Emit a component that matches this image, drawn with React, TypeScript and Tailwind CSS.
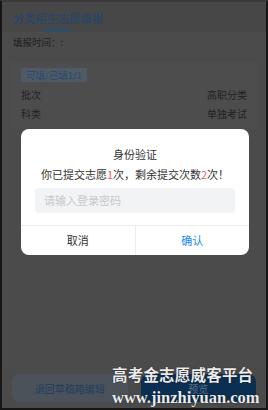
import React from 'react';

const cjk = '"Noto Sans CJK SC", "Noto Sans", sans-serif';

function InfoRow({ label, value }: { label: string; value: string }) {
  return (
    <div className="flex items-center justify-between h-[19px] text-[10px] leading-[14px] text-[#222222]">
      <span>{label}</span>
      <span>{value}</span>
    </div>
  );
}

function VerifyDialog() {
  return (
    <div className="absolute left-[19px] top-[127px] w-[228px] bg-white rounded-[8px] overflow-hidden">
      <div className="pt-[17px] text-center text-[11px] leading-[16px] text-[#323233]">身份验证</div>
      <div className="mt-[4px] text-center text-[11px] leading-[16px] text-[#323233]">
        你已提交志愿<span className="text-[#f25a5e]">1</span>次，剩余提交次数<span className="text-[#f25a5e]">2</span>次！
      </div>
      <div className="mx-[14px] mt-[6px] h-[25px] rounded-[4px] bg-[#f2f3f5] flex items-center px-[9px] text-[11px] text-[#c8c9cc]">
        请输入登录密码
      </div>
      <div className="mt-[12px] border-t border-[#ebedf0] flex h-[30px]">
        <button className="flex-1 text-[11px] text-[#323233] border-r border-[#ebedf0]">取消</button>
        <button className="flex-1 text-[11px] text-[#1989fa]">确认</button>
      </div>
    </div>
  );
}

export default function App() {
  return (
    <div
      className="relative w-[268px] h-[410px] bg-[#4b4b4b] border-2 border-[#161616] border-t-[#3a3a3a] flex flex-col overflow-hidden"
      style={{ fontFamily: cjk }}
    >
      {/* page under the mask */}
      <div className="h-[30px] bg-[#474747] px-[11px] flex flex-col">
        <div className="pt-[9px] text-[11px] leading-[14px] text-[#1d4674] tracking-[0.3px]">分类招生志愿填报</div>
        <div className="ml-[31px] mt-[4px] w-[28px] h-[2px] bg-[#1f4f80] rounded-full" />
      </div>
      <div className="px-[11px] mt-[3px] text-[9.5px] leading-[14px] text-[#202020]">填报时间：:</div>

      <div className="mx-[8px] mt-[13px] bg-[#4d4d4d] px-[11px] pt-[6px] pb-[4px]">
        <div className="flex">
          <div className="bg-[#4f5a66] px-[5px] h-[14px] leading-[14px] text-[9.5px] text-[#284a6e]">可填/已填1/1</div>
        </div>
        <div className="mt-[3px]">
          <InfoRow label="批次" value="高职分类" />
          <InfoRow label="科类" value="单独考试" />
        </div>
      </div>

      <div className="mt-auto h-[40px] bg-[#4a4a4a] px-[10px] flex items-center gap-[13px]">
        <button className="flex-1 h-[28px] rounded-[8px] bg-[#4b5259] text-[10px] text-[#1f3f60]">退回草稿箱编辑</button>
        <button className="flex-1 h-[28px] rounded-[8px] bg-[#0b2f52] text-[10px] text-[#5c7088]">预览</button>
      </div>

      <VerifyDialog />

      {/* watermark */}
      <div
        className="absolute left-[110px] top-[366px] text-[#ececec] font-bold leading-none"
        style={{ fontFamily: '"Liberation Serif", "Noto Sans CJK SC", serif', textShadow: '0 0 1px #000' }}
      >
        <div className="text-[15.5px] tracking-[0.2px]">高考金志愿威客平台</div>
        <div className="mt-[6px] text-[16.5px]">www.jinzhiyuan.com</div>
      </div>
    </div>
  );
}
